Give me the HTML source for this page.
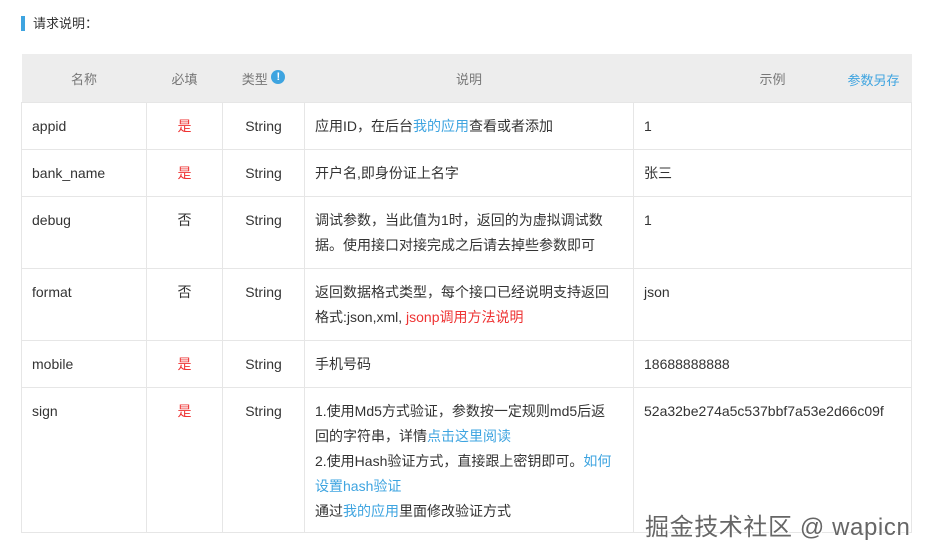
<!DOCTYPE html>
<html><head><meta charset="utf-8"><style>
body{margin:0;background:#fff;font-family:"Liberation Sans","Noto Sans CJK SC",sans-serif;font-size:14px;color:#333;width:935px;height:556px;overflow:hidden;position:relative}
.t{position:absolute;left:21px;top:16px;border-left:4px solid #3ea4e0;padding-left:8px;height:15px;line-height:15px;font-size:13px}
table{position:absolute;left:21px;top:54px;border-collapse:collapse;table-layout:fixed;width:890px}
th{background:#ededed;height:48px;font-weight:normal;color:#777;font-size:13px;padding:0}
td{border:1px solid #e6e6e6;vertical-align:top;padding:11px 10px 0 10px;line-height:25px;box-sizing:border-box}
td.d{padding-right:18px}
td.c{text-align:center}
.r{color:#e33}.b{color:#3ea4e0}
.i{display:inline-block;width:14px;height:14px;border-radius:50%;background:#3ea4e0;color:#fff;font-size:11px;line-height:14px;text-align:center;font-weight:bold;vertical-align:4px}
.wm{position:absolute;left:645px;top:507px;font-size:24px;letter-spacing:0.6px;color:#666;text-shadow:1px 1px 0 #fff,-1px -1px 0 #fff}
</style></head><body>
<div class="t">请求说明：</div>
<table>
<colgroup><col style="width:125px"><col style="width:76px"><col style="width:82px"><col style="width:329px"><col style="width:278px"></colgroup>
<tr><th>名称</th><th>必填</th><th>类型 <span class="i">!</span></th><th>说明</th><th style="position:relative">示例<span class="b" style="position:absolute;right:12px;top:16px">参数另存</span></th></tr>
<tr style="height:47px"><td>appid</td><td class="c r">是</td><td class="c">String</td><td class="d">应用ID，在后台<span class="b">我的应用</span>查看或者添加</td><td>1</td></tr>
<tr style="height:47px"><td>bank_name</td><td class="c r">是</td><td class="c">String</td><td class="d">开户名,即身份证上名字</td><td>张三</td></tr>
<tr style="height:72px"><td>debug</td><td class="c">否</td><td class="c">String</td><td class="d">调试参数，当此值为1时，返回的为虚拟调试数据。使用接口对接完成之后请去掉些参数即可</td><td>1</td></tr>
<tr style="height:72px"><td>format</td><td class="c">否</td><td class="c">String</td><td class="d">返回数据格式类型，每个接口已经说明支持返回格式:json,xml, <span class="r">jsonp调用方法说明</span></td><td>json</td></tr>
<tr style="height:47px"><td>mobile</td><td class="c r">是</td><td class="c">String</td><td class="d">手机号码</td><td>18688888888</td></tr>
<tr style="height:145px"><td>sign</td><td class="c r">是</td><td class="c">String</td><td class="d">1.使用Md5方式验证，参数按一定规则md5后返回的字符串，详情<span class="b">点击这里阅读</span><br>2.使用Hash验证方式，直接跟上密钥即可。<span class="b">如何设置hash验证</span><br>通过<span class="b">我的应用</span>里面修改验证方式</td><td>52a32be274a5c537bbf7a53e2d66c09f</td></tr>
</table>
<div class="wm">掘金技术社区 @ wapicn</div>
</body></html>
